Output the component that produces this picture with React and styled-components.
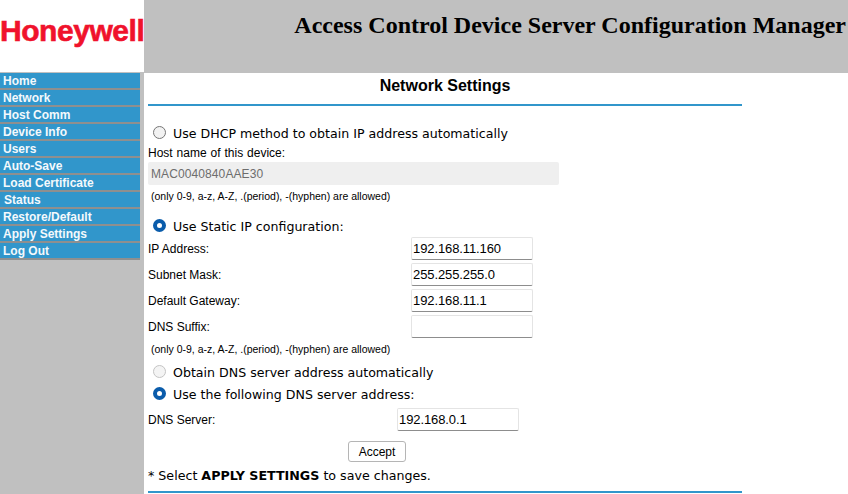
import { createGlobalStyle, styled } from "styled-components"

const Global = createGlobalStyle`
    html, body {
        margin: 0;
        padding: 0;
        height: 494px;
        overflow: hidden;
        background: #fff;
    }
`

const PageWrap = styled.div`
    width: 848px;
    height: 494px;
    overflow: hidden;
    display: grid;
    grid-template-columns: 144px 1fr;
    grid-template-rows: 73px 1fr;
    font-family: "Liberation Sans", Arial, sans-serif;
`

const LogoBox = styled.div`
    background: #fff;
    display: flex;
    align-items: center;
    overflow: hidden;
    border-bottom: 1px solid #c0c0c0;
`

const Logo = styled.span`
    color: #f0122c;
    font-weight: 700;
    font-size: 30px;
    letter-spacing: -0.45px;
    line-height: 1;
    -webkit-text-stroke: 0.6px #f0122c;
    margin-top: -11px;
`

const Banner = styled.div`
    background: #c0c0c0;
    display: flex;
    justify-content: flex-end;
    padding: 12px 2px 0 0;
`

const BannerTitle = styled.h1`
    margin: 0;
    font-family: "Liberation Serif", "Times New Roman", serif;
    font-size: 24px;
    font-weight: 700;
    line-height: 27px;
    color: #000;
    white-space: nowrap;
`

const Sidebar = styled.nav`
    background: #c0c0c0;
    display: flex;
    flex-direction: column;
`

const MenuItem = styled.a`
    display: block;
    width: 140px;
    height: 17px;
    box-sizing: border-box;
    background: #3196cb;
    border-bottom: 2px solid #8f8f8f;
    color: #f4f9fc;
    font-size: 12px;
    font-weight: 700;
    line-height: 17px;
    padding-left: ${(p) => (p.$indent ? 4 : 3)}px;
`

const Content = styled.main`
    padding: 0 106px 0 4px;
    color: #000;
`

const Title = styled.h2`
    margin: 0;
    height: 31px;
    border-bottom: 2px solid #3196cb;
    box-sizing: content-box;
    text-align: center;
    font-size: 16px;
    font-weight: 700;
    line-height: 26px;
`

const RadioRow = styled.label`
    display: flex;
    align-items: center;
    gap: 7px;
    padding-left: 5px;
    height: ${(p) => p.$h || 20}px;
    margin-top: ${(p) => p.$top || 0}px;
    font-family: "DejaVu Sans", Verdana, sans-serif;
    font-size: 12.6px;
    white-space: nowrap;
`

const Radio = styled.input.attrs({ type: "radio" })`
    appearance: none;
    margin: -2px 0 0;
    width: 13px;
    height: 13px;
    border-radius: 50%;
    flex: none;
    border: 1px solid #767676;
    background: #f2f2f2;
    &:checked {
        border: 4px solid #0a5cab;
        background: #fff;
    }
    &:disabled {
        border-color: #c4c4c4;
        background: #f4f4f4;
    }
`

const Label = styled.div`
    font-size: 12px;
    line-height: 14px;
`

const HostLabel = styled(Label)`
    margin-top: 3px;
    word-spacing: 0.6px;
`

const HostInput = styled.input`
    display: block;
    box-sizing: border-box;
    width: 411px;
    height: 23px;
    margin-top: 2px;
    padding: 0 3px;
    border: 0;
    border-radius: 2px;
    background: #efefef;
    color: #6d6d6d;
    font-family: "Liberation Sans", Arial, sans-serif;
    font-size: 12px;
    letter-spacing: 0.1px;
`

const Note = styled.div`
    font-size: 10.5px;
    line-height: 12px;
    margin-top: ${(p) => p.$top || 0}px;
    padding-left: 3px;
    white-space: nowrap;
`

const FieldRow = styled.div`
    display: flex;
    align-items: flex-start;
    justify-content: space-between;
    width: ${(p) => p.$width || 385}px;
    height: ${(p) => p.$h || 26}px;
    margin-top: ${(p) => p.$top || 0}px;
`

const FieldInput = styled.input`
    box-sizing: border-box;
    width: 122px;
    height: 23px;
    padding: 0 1px;
    border: 1px solid #e4e4e4;
    border-bottom-color: #8d8d8d;
    border-radius: 2px;
    background: #fff;
    color: #000;
    font-family: "Liberation Sans", Arial, sans-serif;
    font-size: 13px;
    letter-spacing: -0.1px;
    outline: none;
`

const FieldLabel = styled(Label)`
    padding-top: 5px;
`

const Actions = styled.div`
    display: flex;
    justify-content: center;
    width: 458px;
    margin-top: 10px;
`

const AcceptButton = styled.button`
    box-sizing: border-box;
    width: 58px;
    height: 21px;
    padding: 0;
    border: 1px solid #b5b5b5;
    border-radius: 3px;
    background: #fff;
    color: #000;
    font-family: "Liberation Sans", Arial, sans-serif;
    font-size: 12px;
`

const SaveNote = styled.div`
    margin-top: 6px;
    height: 15px;
    font-family: "DejaVu Sans", Verdana, sans-serif;
    font-size: 12.65px;
    line-height: 15px;
    white-space: nowrap;
`

const BottomRule = styled.div`
    margin-top: 8px;
    width: 594px;
    height: 2px;
    background: #3196cb;
`

const menu = [
    "Home",
    "Network",
    "Host Comm",
    "Device Info",
    "Users",
    "Auto-Save",
    "Load Certificate",
    "Status",
    "Restore/Default",
    "Apply Settings",
    "Log Out",
]

const fields = [
    ["IP Address:", "192.168.11.160"],
    ["Subnet Mask:", "255.255.255.0"],
    ["Default Gateway:", "192.168.11.1"],
    ["DNS Suffix:", ""],
]

const allowed = "(only 0-9, a-z, A-Z, .(period), -(hyphen) are allowed)"

export default function App() {
    return (
        <PageWrap>
            <Global />
            <LogoBox>
                <Logo>Honeywell</Logo>
            </LogoBox>
            <Banner>
                <BannerTitle>Access Control Device Server Configuration Manager</BannerTitle>
            </Banner>
            <Sidebar>
                {menu.map((item) => (
                    <MenuItem key={item} $indent={item === "Status"}>
                        {item}
                    </MenuItem>
                ))}
            </Sidebar>
            <Content>
                <Title>Network Settings</Title>
                <RadioRow $top={17}>
                    <Radio name="ipMode" />
                    Use DHCP method to obtain IP address automatically
                </RadioRow>
                <HostLabel>Host name of this device:</HostLabel>
                <HostInput disabled defaultValue="MAC0040840AAE30" />
                <Note $top={5}>{allowed}</Note>
                <RadioRow $top={14} $h={21}>
                    <Radio name="ipMode" defaultChecked />
                    Use Static IP configuration:
                </RadioRow>
                {fields.map(([label, value]) => (
                    <FieldRow key={label}>
                        <FieldLabel>{label}</FieldLabel>
                        <FieldInput defaultValue={value} />
                    </FieldRow>
                ))}
                <Note $top={2}>{allowed}</Note>
                <RadioRow $top={7}>
                    <Radio name="dnsMode" disabled />
                    Obtain DNS server address automatically
                </RadioRow>
                <RadioRow $h={22} $top={1}>
                    <Radio name="dnsMode" defaultChecked />
                    Use the following DNS server address:
                </RadioRow>
                <FieldRow $width={371} $h={23} $top={3}>
                    <FieldLabel>DNS Server:</FieldLabel>
                    <FieldInput defaultValue="192.168.0.1" />
                </FieldRow>
                <Actions>
                    <AcceptButton>Accept</AcceptButton>
                </Actions>
                <SaveNote>
                    * Select <b>APPLY SETTINGS</b> to save changes.
                </SaveNote>
                <BottomRule />
            </Content>
        </PageWrap>
    )
}
